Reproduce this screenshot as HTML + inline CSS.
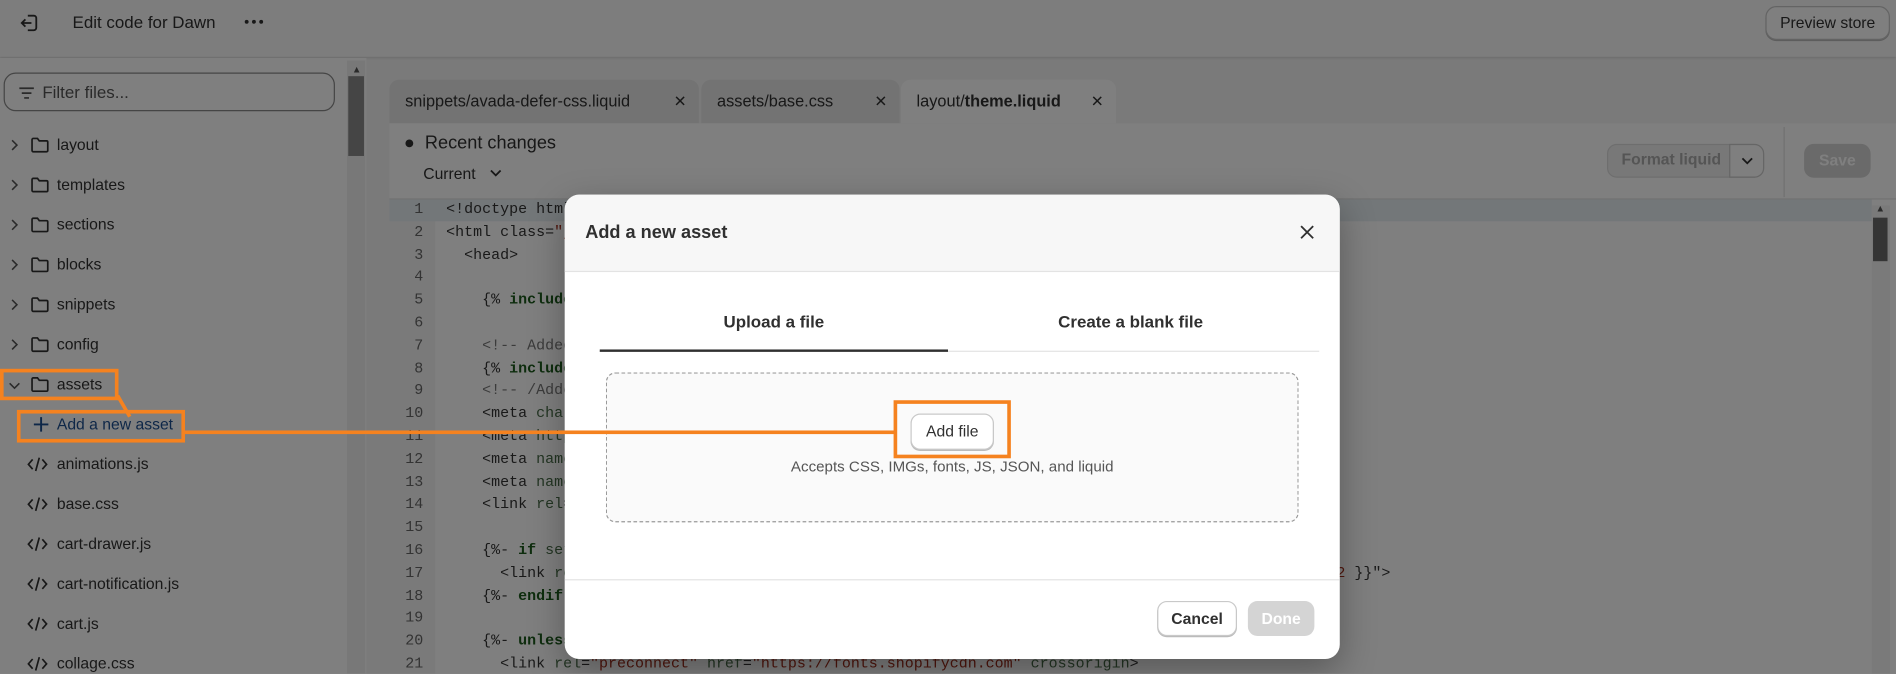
<!DOCTYPE html>
<html><head><meta charset="utf-8">
<style>
html,body{margin:0;padding:0;width:1896px;height:673px;overflow:hidden;background:#808080}
#w{position:absolute;left:0;top:0;width:1568px;height:557px;transform:scale(1.20918);transform-origin:0 0;font-family:"Liberation Sans",sans-serif;color:#303030;overflow:hidden;background:#f4f4f4}
.abs{position:absolute}
.top{left:0;top:0;width:1568px;height:47px;background:#fafafa;box-shadow:0 1px 2px rgba(0,0,0,.15)}
.side{left:0;top:48px;width:303px;height:509px;background:#fff}
.item{position:absolute;left:0;height:22px;font-size:13px;line-height:22px}
.item .ch{position:absolute;left:8px;top:6px}
.item svg.ic{position:absolute;left:25px;top:4px}
.item .t{position:absolute;left:47px}
.tab{position:absolute;top:66px;height:36px;background:#e6e6e6;border-radius:8px 8px 0 0;font-size:13.5px;line-height:36px;padding-left:13px;box-sizing:border-box}
.tab .x{position:absolute;right:10px;top:0;font-size:13px}
.code{font-family:"Liberation Mono",monospace;font-size:12.4px;color:#333}
.ln{position:absolute;left:322px;width:28px;text-align:right;color:#666}
.cl{position:absolute;left:369px;white-space:pre}
.kw{color:#1d5a1d;font-weight:bold}
.at{color:#466a46}
.st{color:#a02a18}
.cm{color:#777}
.ov{left:0;top:0;width:1568px;height:557px;background:rgba(0,0,0,.5)}
.modal{left:467px;top:161px;width:641px;height:384px;background:#fff;border-radius:12px;overflow:hidden;box-shadow:0 10px 30px rgba(0,0,0,.3)}
.btn{position:absolute;border:1px solid #c9c9c9;border-radius:8px;background:#fff;box-shadow:0 1px 0 #bbb;font-size:13px;font-weight:bold;text-align:center;box-sizing:border-box}
.or{position:absolute;border:3px solid #f5821f;box-sizing:border-box}
</style></head><body>
<div id="w">
  <div class="abs top">
    <svg class="abs" style="left:15px;top:10px" width="18" height="18" viewBox="0 0 18 18" fill="none" stroke="#303030" stroke-width="1.5"><path d="M8 3h5a2 2 0 0 1 2 2v8a2 2 0 0 1-2 2H8"/><path d="M11 9H3M6 6L3 9l3 3"/></svg>
    <div class="abs" style="left:60px;top:10px;font-size:14px">Edit code for Dawn</div>
    <svg class="abs" style="left:202px;top:16px" width="16" height="4" viewBox="0 0 16 4" fill="#303030"><circle cx="2" cy="2" r="1.6"/><circle cx="8" cy="2" r="1.6"/><circle cx="14" cy="2" r="1.6"/></svg>
    <div class="btn" style="left:1460px;top:5px;width:103px;height:28px;line-height:26px;font-weight:normal;font-size:13px;border-radius:9px">Preview store</div>
  </div>
  <div class="abs side"></div>
  <div class="abs" style="left:287px;top:50px;width:15px;height:507px;background:#f1f1f1"></div>
  <div class="abs" style="left:291px;top:53px;font-size:8px;color:#555">▲</div>
  <div class="abs" style="left:288px;top:63px;width:13px;height:66px;background:#8a8a8a"></div>
  <div class="abs" style="left:3px;top:60px;width:274px;height:32px;border:1px solid #8a8a8a;border-radius:10px;box-sizing:border-box;background:#fff">
    <svg class="abs" style="left:11px;top:10px" width="14" height="12" viewBox="0 0 14 12" stroke="#555" stroke-width="1.4"><path d="M1 2h12M3 6h8M5 10h4"/></svg>
    <div class="abs" style="left:31px;top:7px;font-size:14px;color:#555">Filter files...</div>
  </div>
  <div id="tree"></div>
  <div class="tab" style="left:322px;width:256px">snippets/avada-defer-css.liquid<span class="x">✕</span></div>
  <div class="tab" style="left:580px;width:164px">assets/base.css<span class="x">✕</span></div>
  <div class="tab" style="left:745px;width:178px;background:#fff">layout/<b>theme.liquid</b><span class="x">✕</span></div>
  <div class="abs" style="left:322px;top:102px;width:1246px;height:62px;background:#fff;border-bottom:1px solid #e3e3e3"></div>
  <div class="abs" style="left:334px;top:110px;font-size:15px">●&nbsp; Recent changes</div>
  <div class="abs" style="left:350px;top:136px;font-size:13px">Current</div>
  <svg class="abs" style="left:405px;top:140px" width="10" height="7" viewBox="0 0 10 7" fill="none" stroke="#303030" stroke-width="1.5"><path d="M1 1l4 4 4-4"/></svg>
  <div class="abs" style="left:1329px;top:119px;width:130px;height:28px;border:1px solid #ddd;border-radius:8px;background:#f0f0f0;box-sizing:border-box"></div>
  <div class="abs" style="left:1341px;top:124px;font-size:13px;color:#aaa;font-weight:bold">Format liquid</div>
  <div class="abs" style="left:1430px;top:119px;width:29px;height:28px;border:1px solid #ccc;border-radius:0 8px 8px 0;background:#fff;box-sizing:border-box"></div>
  <svg class="abs" style="left:1440px;top:130px" width="10" height="7" viewBox="0 0 10 7" fill="none" stroke="#303030" stroke-width="1.5"><path d="M1 1l4 4 4-4"/></svg>
  <div class="abs" style="left:1475px;top:105px;width:1px;height:58px;background:#e3e3e3"></div>
  <div class="abs" style="left:1492px;top:119px;width:55px;height:28px;border-radius:8px;background:#d4d4d4;color:#fff;font-size:13px;font-weight:bold;text-align:center;line-height:28px">Save</div>
  <div class="abs" style="left:322px;top:165px;width:1246px;height:392px;background:#fff"></div>
  <div class="abs" style="left:322px;top:165px;width:38px;height:392px;background:#f4f4f4"></div>
  <div class="abs" style="left:322px;top:165px;width:1226px;height:18px;background:#e7eef3"></div>
  <div class="abs" style="left:1548px;top:170px;width:15px;height:387px;background:#f4f4f4"></div>
  <div class="abs" style="left:1551px;top:168px;font-size:8px;color:#555">▲</div>
  <div class="abs" style="left:1549px;top:180px;width:12px;height:36px;background:#6a6a6a"></div>
  <div id="code" class="code"></div>
  <div class="abs ov"></div>
  <div class="abs modal">
    <div class="abs" style="left:0;top:0;width:641px;height:63px;background:#f7f7f7;border-bottom:1px solid #e3e3e3"></div>
    <div class="abs" style="left:17px;top:23px;font-size:15px;font-weight:bold">Add a new asset</div>
    <svg class="abs" style="left:608px;top:25px" width="12" height="12" viewBox="0 0 12 12" stroke="#303030" stroke-width="1.5"><path d="M1 1l10 10M11 1L1 11"/></svg>
    <div class="abs" style="left:29px;top:97px;width:288px;text-align:center;font-size:14px;font-weight:bold">Upload a file</div>
    <div class="abs" style="left:317px;top:97px;width:302px;text-align:center;font-size:14px;font-weight:bold">Create a blank file</div>
    <div class="abs" style="left:29px;top:129px;width:595px;height:1px;background:#e3e3e3"></div>
    <div class="abs" style="left:29px;top:128px;width:288px;height:2px;background:#303030"></div>
    <div class="abs" style="left:34px;top:147px;width:573px;height:124px;border:1px dashed #9a9a9a;border-radius:8px;background:#fafafa;box-sizing:border-box"></div>
    <div class="btn" style="left:286px;top:181px;width:69px;height:30px;line-height:28px;font-weight:normal">Add file</div>
    <div class="abs" style="left:34px;top:218px;width:573px;text-align:center;font-size:12.5px;color:#555">Accepts CSS, IMGs, fonts, JS, JSON, and liquid</div>
    <div class="abs" style="left:0;top:318px;width:641px;height:1px;background:#e3e3e3"></div>
    <div class="btn" style="left:490px;top:336px;width:66px;height:29px;line-height:27px">Cancel</div>
    <div class="abs" style="left:565px;top:336px;width:55px;height:29px;border-radius:8px;background:#d4d4d4;color:#fff;font-size:13px;font-weight:bold;text-align:center;line-height:29px">Done</div>
  </div>
  <div class="or" style="left:0;top:305px;width:98px;height:26px"></div>
  <div class="or" style="left:14px;top:339px;width:139px;height:27px"></div>
  <div class="abs" style="left:96px;top:328px;width:3px;height:20px;background:#f5821f;transform:rotate(-30deg);transform-origin:top left"></div>
  <div class="abs" style="left:152px;top:356px;width:588px;height:3px;background:#f5821f"></div>
  <div class="or" style="left:739px;top:331px;width:97px;height:48px"></div>
</div>
<script>
var items=[["r","folder","layout"],["r","folder","templates"],["r","folder","sections"],["r","folder","blocks"],["r","folder","snippets"],["r","folder","config"],["d","folder","assets"],["","plus","Add a new asset"],["","code","animations.js"],["","code","base.css"],["","code","cart-drawer.js"],["","code","cart-notification.js"],["","code","cart.js"],["","code","collage.css"]];
var h="";
items.forEach(function(it,i){
 var y=109+i*33;var ic="",ch="";
 if(it[0]=="r")ch='<svg class="ch" width="8" height="10" viewBox="0 0 8 10" fill="none" stroke="#555" stroke-width="1.3"><path d="M2 1l4 4-4 4"/></svg>';
 if(it[0]=="d")ch='<svg class="ch" width="10" height="8" viewBox="0 0 10 8" fill="none" stroke="#555" stroke-width="1.3" style="top:8px;left:7px"><path d="M1 2l4 4 4-4"/></svg>';
 if(it[1]=="folder")ic='<svg class="ic" width="16" height="14" viewBox="0 0 16 14" fill="none" stroke="#303030" stroke-width="1.4"><path d="M1.5 2.5a1 1 0 0 1 1-1h3.5l1.5 2h6a1 1 0 0 1 1 1v7a1 1 0 0 1-1 1h-11a1 1 0 0 1-1-1z"/></svg>';
 else if(it[1]=="plus")ic='<svg class="ic" width="14" height="14" viewBox="0 0 14 14" stroke="#1d4f91" stroke-width="1.6" style="left:27px"><path d="M7 1v12M1 7h12"/></svg>';
 else ic='<svg class="ic" width="18" height="14" viewBox="0 0 18 14" fill="none" stroke="#303030" stroke-width="1.4" style="left:22px"><path d="M5 3L1.5 7 5 11M13 3l3.5 4-3.5 4M10.5 1.5l-3 11"/></svg>';
 h+='<div class="item" style="top:'+y+'px;width:290px">'+ch+ic+'<span class="t" style="'+(it[1]=="plus"?"color:#1d4f91":"")+'">'+it[2]+'</span></div>';
});
document.getElementById("tree").innerHTML=h;
var L=['&lt;!doctype html&gt;','&lt;html class=<span class="st">"js"</span> lang=<span class="st">"{{ request.locale.iso_code }}"</span>&gt;','  &lt;head&gt;','','    {% <span class="kw">include</span> <span class="st">\'avada-defer-css\'</span> %}','','    <span class="cm">&lt;!-- Added by AVADA --&gt;</span>','    {% <span class="kw">include</span> <span class="st">\'avada-seo\'</span> %}','    <span class="cm">&lt;!-- /Added by AVADA --&gt;</span>','    &lt;meta <span class="at">charset</span>=<span class="st">"utf-8"</span>&gt;','    &lt;meta <span class="at">http-equiv</span>=<span class="st">"X-UA-Compatible"</span> content=<span class="st">"IE=edge"</span>&gt;','    &lt;meta <span class="at">name</span>=<span class="st">"viewport"</span> content=<span class="st">"width=device-width,initial-scale=1"</span>&gt;','    &lt;meta <span class="at">name</span>=<span class="st">"theme-color"</span> content=<span class="st">""</span>&gt;','    &lt;link <span class="at">rel</span>=<span class="st">"canonical"</span> href=<span class="st">"{{ canonical_url }}"</span>&gt;','','    {%- <span class="kw">if</span> <span class="at">settings.favicon != blank</span> -%}','      &lt;link <span class="at">rel</span>=<span class="st">"icon"</span> type=<span class="st">"image/png"</span> href=<span class="st">"{{ settings.favicon | image_url: width: 32, height: 32 </span>}}"&gt;','    {%- <span class="kw">endif</span> -%}','','    {%- <span class="kw">unless</span> settings.type_header_font.system? -%}','      &lt;link <span class="at">rel</span>=<span class="st">"preconnect"</span> <span class="at">href</span>=<span class="st">"https://fonts.shopifycdn.com"</span> <span class="at">crossorigin</span>&gt;'];
var c="";
L.forEach(function(s,i){var y=166+i*18.8;c+='<div class="ln" style="top:'+y+'px">'+(i+1)+'</div><div class="cl" style="top:'+y+'px">'+s+'</div>';});
document.getElementById("code").innerHTML=c;
</script>
</body></html>
